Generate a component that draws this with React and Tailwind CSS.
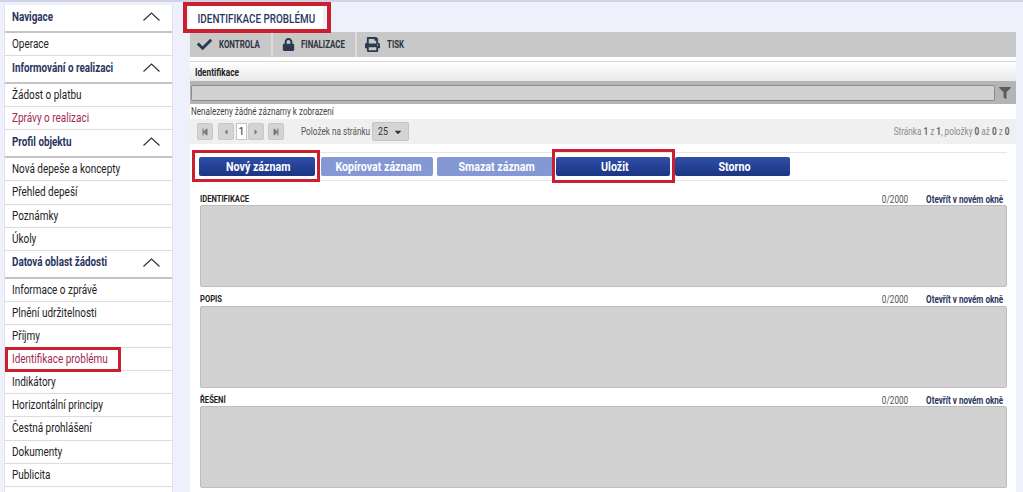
import { FaCheck, FaLock, FaPrint, FaFilter, FaStepBackward, FaStepForward, FaCaretLeft, FaCaretRight, FaCaretDown } from "react-icons/fa";

const sections = [
  { title: "Navigace", items: [{ label: "Operace" }] },
  {
    title: "Informování o realizaci",
    items: [{ label: "Žádost o platbu" }, { label: "Zprávy o realizaci", active: true }],
  },
  {
    title: "Profil objektu",
    items: [
      { label: "Nová depeše a koncepty" },
      { label: "Přehled depeší" },
      { label: "Poznámky" },
      { label: "Úkoly" },
    ],
  },
  {
    title: "Datová oblast žádosti",
    items: [
      { label: "Informace o zprávě" },
      { label: "Plnění udržitelnosti" },
      { label: "Příjmy" },
      { label: "Identifikace problému", active: true, marked: true },
      { label: "Indikátory" },
      { label: "Horizontální principy" },
      { label: "Čestná prohlášení" },
      { label: "Dokumenty" },
      { label: "Publicita" },
      { label: "" },
    ],
  },
];

const fields = ["IDENTIFIKACE", "POPIS", "ŘEŠENÍ"];

function Chevron() {
  return (
    <svg width="17" height="9" viewBox="0 0 17 9" fill="none" stroke="#333" strokeWidth="1.2" className="shrink-0">
      <path d="M.5 8.5 8.5 1l8 7.5" />
    </svg>
  );
}

function SideMenu() {
  return (
    <aside className="w-[169px] shrink-0 bg-white mt-[3px] border-x border-[#dfe2ee]">
      {sections.map((section) => (
        <div key={section.title}>
          <div className="h-[28px] flex items-center justify-between pl-[7px] pr-[12px] pb-[3px] border-b-2 border-[#c4c4c4] text-[12px] font-bold text-[#2a3560]">
            <span className="whitespace-nowrap inline-block scale-x-[.82] origin-left">{section.title}</span>
            <Chevron />
          </div>
          {section.items.map((item) => (
            <div key={item.label} className="relative h-[23.12px] flex items-center pl-[7px] border-b border-[#dcdcdc] text-[12px]">
              <span className={(item.active ? "text-[#a3294f] " : "text-[#222] ") + "whitespace-nowrap inline-block scale-x-[.83] origin-left"}>
                {item.label}
              </span>
              {item.marked && <div className="absolute left-0 -top-px w-[116px] h-[25px] border-[3px] border-[#c8202f]" />}
            </div>
          ))}
        </div>
      ))}
    </aside>
  );
}

function PagerButton({ children }) {
  return (
    <div className="w-[16px] h-[17px] flex items-center justify-center rounded-[2px] bg-[#d4d4d4] border border-[#c8c8c8] text-[#777] text-[8px]">
      {children}
    </div>
  );
}

function ActionButton({ label, disabled, className, frame }) {
  return (
    <div
      className={
        "relative h-[19px] flex items-center justify-center pl-[3px] rounded-[2px] text-[13px] font-bold text-white " +
        (disabled ? "bg-[#8398d4] " : "bg-gradient-to-b from-[#2f4fa8] to-[#1b3583] ") +
        className
      }
    >
      <span className="whitespace-nowrap inline-block scale-x-[.82]">{label}</span>
      {frame && <div className={"absolute border-[3px] border-[#c8202f] " + frame} />}
    </div>
  );
}

function TextField({ label }) {
  return (
    <div className="mb-[6.5px]">
      <div className="h-[12px] flex items-center justify-between text-[9.5px]">
        <span className="font-bold text-[#222] whitespace-nowrap inline-block scale-x-[.8] origin-left">{label}</span>
        <div className="flex pr-[4px] text-[10px]">
          <span className="text-[#555] whitespace-nowrap inline-block scale-x-[.82] origin-right">0/2000</span>
          <span className="font-bold text-[#2a3560] whitespace-nowrap inline-block scale-x-[.81] origin-right">Otevřít v novém okně</span>
        </div>
      </div>
      <div className="h-[82px] bg-[#d2d2d2] border border-[#bdbdbd] rounded-[2px]" />
    </div>
  );
}

export default function App() {
  return (
    <div className="w-[1023px] h-[492px] overflow-hidden bg-[#eef1fb] border-t-2 border-[#cfd3e3] flex pl-[4px] font-['Roboto',sans-serif]">
      <SideMenu />
      <main className="w-[826px] ml-[17px]">
        <div className="relative w-[134px] h-[27px] mt-[3px] -ml-px flex items-center justify-center bg-white text-[13px] font-medium text-[#2a3560]">
          <span className="whitespace-nowrap inline-block scale-x-[.76]">IDENTIFIKACE PROBLÉMU</span>
          <div className="absolute -left-[6px] -right-[8px] -top-[3px] -bottom-px border-4 border-[#c8202f]" />
        </div>
        <div className="h-[25px] bg-[#c8c8c8] flex text-[10px] font-bold text-[#2c3440]">
          <div className="w-[83px] flex items-center gap-[7px] pl-[7px] border-r-2 border-[#dcdcdc]">
            <FaCheck className="text-[15px] text-[#2c3a4f] shrink-0" />
            <span className="whitespace-nowrap inline-block scale-x-[.79] origin-left">KONTROLA</span>
          </div>
          <div className="w-[84px] flex items-center gap-[6px] pl-[9px] border-r-2 border-[#dcdcdc]">
            <FaLock className="text-[13px] text-[#2c3a4f] shrink-0" />
            <span className="whitespace-nowrap inline-block scale-x-[.79] origin-left">FINALIZACE</span>
          </div>
          <div className="flex items-center gap-[7px] pl-[8px]">
            <FaPrint className="text-[15px] text-[#2c3a4f] shrink-0" />
            <span className="whitespace-nowrap inline-block scale-x-[.79] origin-left">TISK</span>
          </div>
        </div>
        <div className="bg-white h-[440px]">
          <div className="pt-[4px]">
            <div className="h-[20px] flex items-center pt-px px-[5px] bg-gradient-to-b from-white to-[#e8e8e8] border-t border-[#d8d8d8] text-[10px] font-bold text-[#222]">
              <span className="whitespace-nowrap inline-block scale-x-[.83] origin-left">Identifikace</span>
            </div>
            <div className="h-[23px] bg-[#b4b4b4] flex items-center pl-px pr-[5px] gap-[4px]">
              <div className="flex-1 h-[16px] bg-[#d2d2d2] border border-[#8c8c8c] rounded-[2px]" />
              <FaFilter className="text-[12px] text-[#5c5c5c]" />
            </div>
            <div className="h-[15px] flex items-center px-px text-[10px] text-[#444]">
              <span className="whitespace-nowrap inline-block scale-x-[.81] origin-left">Nenalezeny žádné záznamy k zobrazení</span>
            </div>
            <div className="h-[25px] bg-[#f0f0f0] flex items-center pl-[7px] pr-[7px] text-[10.5px] text-[#555]">
              <PagerButton><FaStepBackward /></PagerButton>
              <div className="w-[5px]" />
              <PagerButton><FaCaretLeft /></PagerButton>
              <div className="w-[11px] h-[17px] ml-[2px] flex items-center justify-center bg-white border border-[#c4c4c4] text-[#333]">1</div>
              <div className="w-px" />
              <PagerButton><FaCaretRight /></PagerButton>
              <div className="w-[4px]" />
              <PagerButton><FaStepForward /></PagerButton>
              <span className="ml-[17px] w-[68px] whitespace-nowrap inline-block scale-x-[.78] origin-left">Položek na stránku</span>
              <div className="ml-[3px] w-[37px] h-[19px] flex items-center justify-between px-[5px] bg-[#d4d4d4] border border-[#c4c4c4] rounded-[2px] text-[#333]">
                <span className="whitespace-nowrap inline-block scale-x-[.85] origin-left">25</span>
                <FaCaretDown className="text-[10px]" />
              </div>
              <span className="ml-auto text-[#8a8a8a] whitespace-nowrap inline-block scale-x-[.78] origin-right">
                Stránka <span className="font-bold text-[#666]">1</span> z <span className="font-bold text-[#666]">1</span>, položky <span className="font-bold text-[#666]">0</span> až <span className="font-bold text-[#666]">0</span> z <span className="font-bold text-[#666]">0</span>
              </span>
            </div>
          </div>
          <div className="mx-[9px] mt-[8px] h-[29px] pt-[4px] border-y border-[#e6e6e6] flex items-start">
            <ActionButton label="Nový záznam" className="w-[116px]" frame="-left-[7px] -right-[5px] -top-[7px] -bottom-[6px]" />
            <ActionButton label="Kopírovat záznam" className="w-[112px] ml-[6px]" disabled />
            <ActionButton label="Smazat záznam" className="w-[116px] ml-[4px]" disabled />
            <ActionButton label="Uložit" className="w-[114px] ml-[3px]" frame="-left-[4px] -right-[5px] -top-[8px] -bottom-[7px]" />
            <ActionButton label="Storno" className="w-[115px] ml-[5px]" />
          </div>
          <div className="pl-[10px] pr-[9px] pt-[12px]">
            {fields.map((label) => (
              <TextField key={label} label={label} />
            ))}
          </div>
        </div>
      </main>
    </div>
  );
}
